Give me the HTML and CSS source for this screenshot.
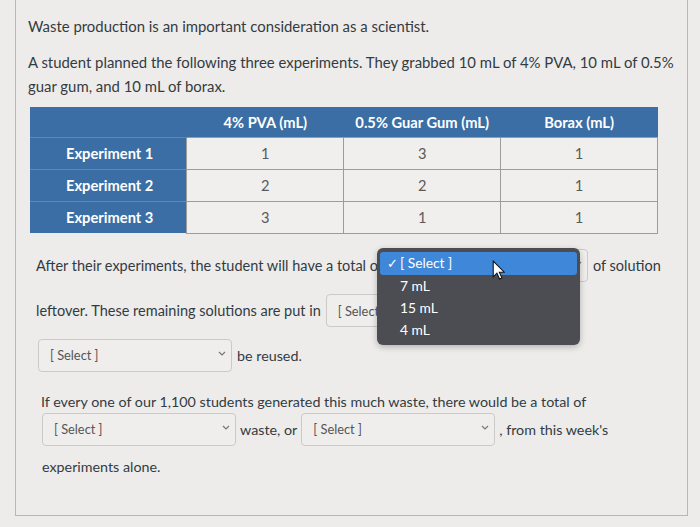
FILE: index.html
```html
<!DOCTYPE html>
<html>
<head>
<meta charset="utf-8">
<link rel="stylesheet" href="styles.css">
</head>
<body>
<div class="panel">
  <p class="p1">Waste production is an important consideration as a scientist.</p>
  <p class="p2">A student planned the following three experiments. They grabbed 10 mL of 4% PVA, 10 mL of 0.5%<br>guar gum, and 10 mL of borax.</p>
  <table class="data">
    <thead>
      <tr><th></th><th>4% PVA (mL)</th><th>0.5% Guar Gum (mL)</th><th>Borax (mL)</th></tr>
    </thead>
    <tbody>
      <tr><th>Experiment 1</th><td>1</td><td>3</td><td>1</td></tr>
      <tr><th>Experiment 2</th><td>2</td><td>2</td><td>1</td></tr>
      <tr><th>Experiment 3</th><td>3</td><td>1</td><td>1</td></tr>
    </tbody>
  </table>

  <div class="line l1">
    <span>After their experiments, the student will have a total of</span>
    <span class="sel sel-wide"><span class="sel-text"></span><svg class="chev" viewBox="0 0 8 5"><polyline points="1,1 4,4 7,1"/></svg></span>
    <span>of solution</span>
  </div>
  <div class="line l2">
    <span>leftover. These remaining solutions are put in</span>
    <span class="sel"><span class="sel-text">[ Select ]</span><svg class="chev" viewBox="0 0 8 5"><polyline points="1,1 4,4 7,1"/></svg></span>
  </div>
  <div class="line l3">
    <span class="sel"><span class="sel-text">[ Select ]</span><svg class="chev" viewBox="0 0 8 5"><polyline points="1,1 4,4 7,1"/></svg></span>
    <span>be reused.</span>
  </div>

  <div class="line l4">
    <span>If every one of our 1,100 students generated this much waste, there would be a total of</span>
  </div>
  <div class="line l5">
    <span class="sel"><span class="sel-text">[ Select ]</span><svg class="chev" viewBox="0 0 8 5"><polyline points="1,1 4,4 7,1"/></svg></span>
    <span>waste, or</span>
    <span class="sel"><span class="sel-text">[ Select ]</span><svg class="chev" viewBox="0 0 8 5"><polyline points="1,1 4,4 7,1"/></svg></span>
    <span>, from this week's</span>
  </div>
  <div class="line l6">
    <span>experiments alone.</span>
  </div>

  <div class="menu">
    <div class="opt active"><span class="check">✓</span>[ Select ]</div>
    <div class="opt">7 mL</div>
    <div class="opt">15 mL</div>
    <div class="opt">4 mL</div>
  </div>
  <svg class="cursor" viewBox="0 0 12 19"><path d="M1,1 L1,16 L4.5,12.5 L7,18 L9.2,17 L6.8,11.6 L11.5,11.6 Z"/></svg>
</div>
</body>
</html>
```

FILE: styles.css
```css
* { box-sizing: border-box; }
html, body {
  margin: 0;
  background: #edecea;
}
body {
  font-family: Lato, "Open Sans", sans-serif;
  color: #333b42;
  font-size: 14.9px;
}
.panel {
  position: relative;
  margin-left: 15px;
  width: 673px;
  height: 516px;
  border-left: 1px solid #b7b7b4;
  border-right: 1px solid #b7b7b4;
  border-bottom: 1px solid #b7b7b4;
  padding-top: 14px;
}
.p1 {
  margin: 0;
  padding-left: 12px;
  line-height: 24px;
}
.p2 {
  margin: 12px 0 0;
  padding-left: 12px;
  line-height: 24px;
}
.data {
  margin: 9px 0 0 14px;
  border-collapse: collapse;
  width: 628px;
  table-layout: fixed;
  font-size: 14.7px;
}
.data thead th {
  background: #3a6ea5;
  color: #fff;
  font-weight: 700;
  height: 30px;
  text-align: center;
  padding: 0;
}
.data tbody th {
  background: #3a6ea5;
  color: #fff;
  font-weight: 700;
  text-align: left;
  padding: 0 0 0 36px;
  height: 32px;
  border-top: 1px solid #5a88b8;
}
.data td {
  background: #f0efed;
  color: #5a5a5a;
  text-align: center;
  border: 1px solid #9c9c9a;
  height: 32px;
  padding: 0;
}
.line {
  display: flex;
  align-items: center;
  gap: 5px;
  font-size: 14.5px;
}
.l1 { margin-top: 15px; padding-left: 20px; height: 34px; }
.l2 { margin-top: 11px; padding-left: 20px; height: 34px; }
.l3 { margin-top: 11px; padding-left: 22px; height: 33px; font-size: 14.3px; }
.l4 { margin-top: 20px; padding-left: 25px; height: 20px; font-size: 14.3px; }
.l5 { margin-top: 1px; padding-left: 26px; height: 33px; gap: 4px; font-size: 14.3px; }
.l6 { margin-top: 11px; padding-left: 26px; height: 20px; font-size: 14.3px; }
.sel {
  display: inline-flex;
  align-items: center;
  justify-content: space-between;
  width: 194px;
  height: 33px;
  border: 1px solid #cacac8;
  border-radius: 4px;
  background: #efeeec;
  padding: 0 5px 0 11px;
  font-size: 12.8px;
  color: #555;
}
.sel-wide { width: 200px; }
.chev {
  width: 8px;
  height: 5px;
  margin-top: -4px;
  fill: none;
  stroke: #777;
  stroke-width: 1.2;
}
.menu {
  position: absolute;
  left: 361px;
  top: 248px;
  width: 203px;
  height: 97px;
  background: #4b4d52;
  border-radius: 6px;
  padding: 4px 3px;
  box-shadow: 0 2px 6px rgba(0,0,0,.25);
  font-size: 13.8px;
  color: #fff;
}
.opt {
  height: 22px;
  line-height: 22px;
  padding-left: 20px;
  position: relative;
}
.opt.active {
  background: #3f87d9;
  border-radius: 3px;
  height: 23px;
}
.check {
  position: absolute;
  left: 7px;
  top: 0;
  font-size: 13px;
}
.cursor {
  position: absolute;
  left: 476px;
  top: 260px;
  width: 13px;
  height: 20px;
  fill: #fff;
  stroke: #111;
  stroke-width: 1;
}
```
